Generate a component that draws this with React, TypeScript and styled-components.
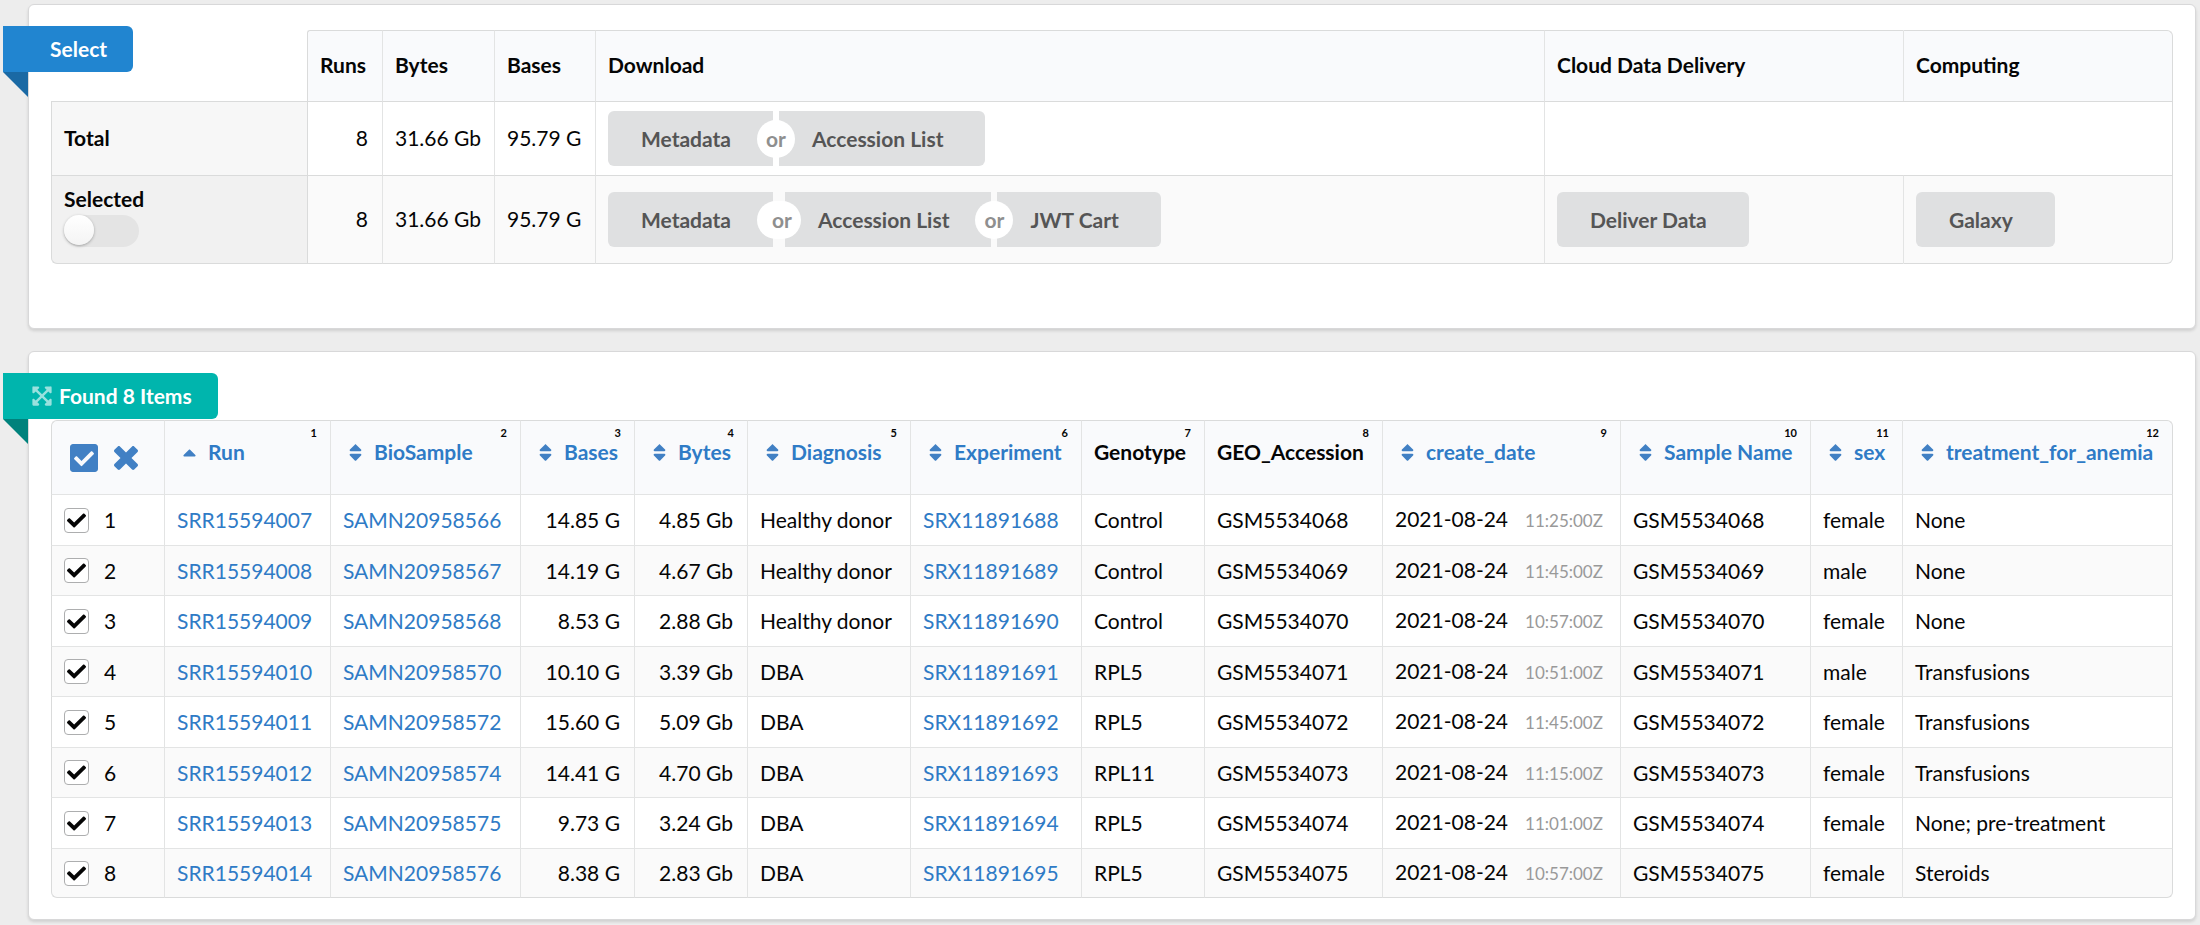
import React, { useState } from "react";
import styled, { createGlobalStyle } from "styled-components";
import { FaCaretUp, FaCheck, FaCheckSquare, FaExpandArrowsAlt, FaSort } from "react-icons/fa";

const ink = "#050505";
const link = "#2f7bc6";
const line = "#dadbdb";
const innerLine = "#e3e4e4";

const GlobalStyle = createGlobalStyle`
  * { box-sizing: border-box; }
  body {
    margin: 0;
    background: #ededed;
    color: ${ink};
    font: 21px/26px Lato, "Liberation Sans", sans-serif;
  }
  button, input { font: inherit; margin: 0; }
  a { color: ${link}; text-decoration: none; }
`;

const Page = styled.main`
  display: flex;
  flex-direction: column;
  gap: 22px;
  padding: 4px 4px 4px 28px;
`;

const Card = styled.section<{ $bottom: number }>`
  position: relative;
  padding: 0 22px ${(p) => p.$bottom}px;
  background: #fff;
  border: 1px solid #d8d8d9;
  border-radius: 6px;
  box-shadow: 0 2px 3px rgba(34, 36, 38, 0.14);
`;

const Ribbon = styled.h2<{ $color: string; $fold: string; $indent: number }>`
  position: relative;
  display: flex;
  align-items: center;
  gap: 6px;
  width: fit-content;
  height: 46px;
  margin: 21px 0 1px -48px;
  padding: 0 26px 0 ${(p) => p.$indent}px;
  border-radius: 0 6px 6px 0;
  background: ${(p) => p.$color};
  color: #fff;
  font-size: 21px;
  font-weight: 700;

  &::after {
    content: "";
    position: absolute;
    left: 0;
    top: 100%;
    border-style: solid;
    border-width: 0 25px 25px 0;
    border-color: transparent ${(p) => p.$fold} transparent transparent;
  }

  svg { opacity: 0.6; }
`;

const OverlayRibbon = styled(Ribbon)`
  position: absolute;
  left: 22px;
  top: 0;
`;

const Table = styled.table`
  width: 100%;
  table-layout: fixed;
  border-collapse: separate;
  border-spacing: 0;

  th, td {
    padding: 0 13px 0 12px;
    border-top: 1px solid ${line};
    border-left: 1px solid ${innerLine};
    text-align: left;
    white-space: nowrap;
  }
  th { font-weight: 700; }
  th:first-child, td:first-child { border-left-color: ${line}; }
  th:last-child, td:last-child { border-right: 1px solid ${line}; }
  tbody tr:last-child > * { border-bottom: 1px solid ${line}; }
  tbody tr:nth-child(even) > * { background: #fafafa; }
  thead th { background: #f9fafc; }
  thead tr > *:last-child { border-top-right-radius: 6px; }
  tbody tr:last-child > *:first-child { border-bottom-left-radius: 6px; }
  tbody tr:last-child > *:last-child { border-bottom-right-radius: 6px; }
`;

const NumberCell = styled.td`
  && {
    padding-right: 14px;
    text-align: right;
  }
`;

const SummaryTable = styled(Table)`
  margin-top: 25px;

  thead tr { height: 71px; }
  tbody tr { height: 74px; }
  tbody tr:last-child { height: 89px; }
  thead td { border: 0; }
  thead td + th { border-top-left-radius: 3px; border-left-color: ${line}; }
  th, ${NumberCell} { padding-bottom: 2px; }
  tbody th { background: #f7f7f7; }
  tbody tr:nth-child(even) > th { background: #f1f1f1; }
  tbody th + td { border-left-color: ${line}; }
`;

const RunsTable = styled(Table)`
  thead tr { height: 74px; }
  thead th:first-child { border-top-left-radius: 6px; }
  tbody tr { height: 50px; }
  tbody tr:nth-child(odd) { height: 51px; }
  tbody td { border-top-color: ${innerLine}; }
`;

const Toggle = styled.input`
  appearance: none;
  display: block;
  width: 75px;
  height: 32px;
  border-radius: 16px;
  background: #e4e4e4;
  cursor: pointer;

  && { margin: 4px 0; }

  &::before {
    content: "";
    display: block;
    width: 30px;
    height: 30px;
    border-radius: 50%;
    background: linear-gradient(#fff, #f4f4f4);
    box-shadow: 0 1px 3px rgba(34, 36, 38, 0.35);
  }
  &:checked { background: #2185d0; }
  &:checked::before { margin-left: 45px; }
`;

const ToggleLabel = styled.label`
  display: block;
  line-height: 24px;
`;

const ButtonRow = styled.div`
  display: flex;
`;

const Button = styled.button`
  height: 55px;
  padding: 0 42px 0 33px;
  border: 0;
  border-radius: 6px;
  background: #dfe0e1;
  color: #555;
  font-weight: 700;
  cursor: pointer;

  &:not(:last-child) { border-top-right-radius: 0; border-bottom-right-radius: 0; }
  &:not(:first-child) { border-top-left-radius: 0; border-bottom-left-radius: 0; }
`;

const Or = styled.span<{ $wide?: boolean }>`
  display: flex;
  align-items: center;
  justify-content: center;
  align-self: center;
  z-index: 1;
  width: ${(p) => (p.$wide ? 44 : 38)}px;
  height: 38px;
  margin: 0 -16px;
  padding-left: ${(p) => (p.$wide ? 6 : 0)}px;
  border-radius: 22px;
  background: #fff;
  color: #8f8f8f;
  font-weight: 700;
`;

const SelectTools = styled.div`
  display: flex;
  align-items: center;
  gap: 14px;
  padding-left: 4px;
`;

const IconButton = styled.button`
  display: flex;
  padding: 0;
  border: 0;
  background: none;
  color: #4180c4;
  cursor: pointer;
`;

const HeadCell = styled.th`
  && {
    padding-top: 6px;
    vertical-align: top;
  }
`;

const ColumnIndex = styled.div`
  font-size: 11px;
  line-height: 12px;
  text-align: right;
`;

const SortLink = styled.a`
  display: flex;
  align-items: center;

  svg { margin: 0 8px 0 2px; color: #4180c4; }
`;

const RowPick = styled.label`
  display: flex;
  align-items: center;
  gap: 15px;
`;

const Tick = styled.span`
  display: grid;
  width: 25px;
  height: 25px;

  > * { grid-area: 1 / 1; }
  svg { place-self: center; pointer-events: none; }
  input:not(:checked) + svg { visibility: hidden; }
`;

const TickInput = styled.input`
  appearance: none;
  border: 1px solid #adaeaf;
  border-radius: 4px;
  background: #fff;
`;

const Time = styled.span`
  margin-left: 17px;
  color: #999;
  font-size: 17px;
`;

const CrossIcon = () => (
  <svg width="24" height="32" viewBox="0 0 384 512" fill="currentColor" aria-hidden="true">
    <path d="M323.1 441l53.9-53.9c9.4-9.4 9.4-24.5 0-33.9L279.8 256l97.2-97.2c9.4-9.4 9.4-24.5 0-33.9L323.1 71c-9.4-9.4-24.5-9.4-33.9 0L192 168.2 94.8 71c-9.4-9.4-24.5-9.4-33.9 0L7 124.9c-9.4 9.4-9.4 24.5 0 33.9l97.2 97.2L7 353.2c-9.4 9.4-9.4 24.5 0 33.9L60.9 441c9.4 9.4 24.5 9.4 33.9 0l97.2-97.2 97.2 97.2c9.3 9.3 24.5 9.3 33.9 0z" />
  </svg>
);

const summaryWidths = [256, 75, 112, 101, undefined, 359, 270];
const runWidths = [113, 166, 190, 114, 113, 163, 171, 123, 178, 238, 190, 92, undefined];

const Columns = ({ widths }: { widths: (number | undefined)[] }) => (
  <colgroup>
    {widths.map((width, i) => (
      <col key={i} width={width} />
    ))}
  </colgroup>
);

const headings = [
  { name: "Run", sort: "asc" },
  { name: "BioSample", sort: "both" },
  { name: "Bases", sort: "both" },
  { name: "Bytes", sort: "both" },
  { name: "Diagnosis", sort: "both" },
  { name: "Experiment", sort: "both" },
  { name: "Genotype" },
  { name: "GEO_Accession" },
  { name: "create_date", sort: "both" },
  { name: "Sample Name", sort: "both" },
  { name: "sex", sort: "both" },
  { name: "treatment_for_anemia", sort: "both" },
];

const runs = [
  ["SRR15594007", "SAMN20958566", "14.85 G", "4.85 Gb", "Healthy donor", "SRX11891688", "Control", "GSM5534068", "11:25:00Z", "female", "None"],
  ["SRR15594008", "SAMN20958567", "14.19 G", "4.67 Gb", "Healthy donor", "SRX11891689", "Control", "GSM5534069", "11:45:00Z", "male", "None"],
  ["SRR15594009", "SAMN20958568", "8.53 G", "2.88 Gb", "Healthy donor", "SRX11891690", "Control", "GSM5534070", "10:57:00Z", "female", "None"],
  ["SRR15594010", "SAMN20958570", "10.10 G", "3.39 Gb", "DBA", "SRX11891691", "RPL5", "GSM5534071", "10:51:00Z", "male", "Transfusions"],
  ["SRR15594011", "SAMN20958572", "15.60 G", "5.09 Gb", "DBA", "SRX11891692", "RPL5", "GSM5534072", "11:45:00Z", "female", "Transfusions"],
  ["SRR15594012", "SAMN20958574", "14.41 G", "4.70 Gb", "DBA", "SRX11891693", "RPL11", "GSM5534073", "11:15:00Z", "female", "Transfusions"],
  ["SRR15594013", "SAMN20958575", "9.73 G", "3.24 Gb", "DBA", "SRX11891694", "RPL5", "GSM5534074", "11:01:00Z", "female", "None; pre-treatment"],
  ["SRR15594014", "SAMN20958576", "8.38 G", "2.83 Gb", "DBA", "SRX11891695", "RPL5", "GSM5534075", "10:57:00Z", "female", "Steroids"],
];

export default function App() {
  const [picked, setPicked] = useState<boolean[]>(runs.map(() => true));
  const pickAll = (value: boolean) => setPicked(runs.map(() => value));
  const toggleRow = (row: number) => setPicked(picked.map((p, i) => (i === row ? !p : p)));

  return (
    <>
      <GlobalStyle />
      <Page>
        <Card $bottom={64}>
          <OverlayRibbon $color="#2185d0" $fold="#1a69a4" $indent={47}>
            Select
          </OverlayRibbon>
          <SummaryTable>
            <Columns widths={summaryWidths} />
            <thead>
              <tr>
                <td />
                <th scope="col">Runs</th>
                <th scope="col">Bytes</th>
                <th scope="col">Bases</th>
                <th scope="col">Download</th>
                <th scope="col">Cloud Data Delivery</th>
                <th scope="col">Computing</th>
              </tr>
            </thead>
            <tbody>
              <tr>
                <th scope="row">Total</th>
                <NumberCell>8</NumberCell>
                <NumberCell>31.66 Gb</NumberCell>
                <NumberCell>95.79 G</NumberCell>
                <td>
                  <ButtonRow>
                    <Button type="button">Metadata</Button>
                    <Or>or</Or>
                    <Button type="button">Accession List</Button>
                  </ButtonRow>
                </td>
                <td colSpan={2} />
              </tr>
              <tr>
                <th scope="row">
                  <ToggleLabel htmlFor="selected">Selected</ToggleLabel>
                  <Toggle id="selected" type="checkbox" />
                </th>
                <NumberCell>8</NumberCell>
                <NumberCell>31.66 Gb</NumberCell>
                <NumberCell>95.79 G</NumberCell>
                <td>
                  <ButtonRow>
                    <Button type="button">Metadata</Button>
                    <Or $wide>or</Or>
                    <Button type="button">Accession List</Button>
                    <Or>or</Or>
                    <Button type="button">JWT Cart</Button>
                  </ButtonRow>
                </td>
                <td>
                  <Button type="button">Deliver Data</Button>
                </td>
                <td>
                  <Button type="button">Galaxy</Button>
                </td>
              </tr>
            </tbody>
          </SummaryTable>
        </Card>

        <Card $bottom={21}>
          <Ribbon $color="#00b5ad" $fold="#00827c" $indent={28}>
            <FaExpandArrowsAlt size={22} />
            Found 8 Items
          </Ribbon>
          <RunsTable>
            <Columns widths={runWidths} />
            <thead>
              <tr>
                <th scope="col">
                  <SelectTools>
                    <IconButton type="button" aria-label="Select all" onClick={() => pickAll(true)}>
                      <FaCheckSquare size={32} />
                    </IconButton>
                    <IconButton type="button" aria-label="Clear selection" onClick={() => pickAll(false)}>
                      <CrossIcon />
                    </IconButton>
                  </SelectTools>
                </th>
                {headings.map(({ name, sort }, i) => (
                  <HeadCell key={name} scope="col">
                    <ColumnIndex>{i + 1}</ColumnIndex>
                    {sort ? (
                      <SortLink href="#sort">
                        {sort === "asc" ? <FaCaretUp size={21} /> : <FaSort size={21} />}
                        {name}
                      </SortLink>
                    ) : (
                      name
                    )}
                  </HeadCell>
                ))}
              </tr>
            </thead>
            <tbody>
              {runs.map(([run, sample, bases, bytes, diagnosis, experiment, genotype, geo, time, sex, treatment], i) => (
                <tr key={run}>
                  <td>
                    <RowPick>
                      <Tick>
                        <TickInput type="checkbox" checked={picked[i]} onChange={() => toggleRow(i)} />
                        <FaCheck size={19} />
                      </Tick>
                      {i + 1}
                    </RowPick>
                  </td>
                  <td><a href="#run">{run}</a></td>
                  <td><a href="#biosample">{sample}</a></td>
                  <NumberCell>{bases}</NumberCell>
                  <NumberCell>{bytes}</NumberCell>
                  <td>{diagnosis}</td>
                  <td><a href="#experiment">{experiment}</a></td>
                  <td>{genotype}</td>
                  <td>{geo}</td>
                  <td>
                    2021-08-24<Time>{time}</Time>
                  </td>
                  <td>{geo}</td>
                  <td>{sex}</td>
                  <td>{treatment}</td>
                </tr>
              ))}
            </tbody>
          </RunsTable>
        </Card>
      </Page>
    </>
  );
}
